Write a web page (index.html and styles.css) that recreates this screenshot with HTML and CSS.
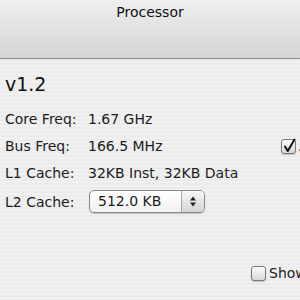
FILE: index.html
```html
<!DOCTYPE html>
<html>
<head>
<meta charset="utf-8">
<link rel="stylesheet" href="styles.css">
</head>
<body>
<div class="window">
  <div class="titlebar"><span class="title">Processor</span></div>
  <div class="content">
    <div class="version">v1.2</div>
    <div class="info">
      <div class="row"><span class="label">Core Freq:</span><span class="value">1.67 GHz</span></div>
      <div class="row"><span class="label">Bus Freq:</span><span class="value value-wide">166.5 MHz</span>
        <span class="check-wrap"><span class="checkbox"><svg class="tick" width="16" height="16" viewBox="0 0 16 16"><path d="M4 8.5 L6.8 13 L13.5 1.5" fill="none" stroke="#111" stroke-width="2" stroke-linecap="round" stroke-linejoin="round"/></svg></span><span class="check-label">Allow</span></span>
      </div>
      <div class="row"><span class="label">L1 Cache:</span><span class="value">32KB Inst, 32KB Data</span></div>
      <div class="row row-popup"><span class="label">L2 Cache:</span>
        <span class="popup"><span class="popup-text">512.0 KB</span><span class="popup-arrows"><svg width="8" height="13" viewBox="0 0 8 13"><path d="M4 1.5 L7 5.5 L1 5.5 Z M4 11.5 L1 7.5 L7 7.5 Z" fill="#222"/></svg></span></span>
      </div>
    </div>
    <div class="bottom">
      <span class="check-wrap"><span class="checkbox"></span><span class="check-label">Show</span></span>
    </div>
  </div>
</div>
</body>
</html>
```
FILE: styles.css
```css
html, body {
  margin: 0;
  padding: 0;
  width: 300px;
  height: 300px;
  overflow: hidden;
}
body {
  font-family: "DejaVu Sans", "Liberation Sans", sans-serif;
  font-size: 14px;
  color: #1c1c1c;
}
.window {
  width: 300px;
  height: 300px;
  display: flex;
  flex-direction: column;
}
.titlebar {
  height: 59px;
  flex: none;
  background: linear-gradient(#efefef, #d4d4d4);
  border-bottom: 1px solid #8c8c8c;
  text-align: center;
  box-sizing: border-box;
  padding-top: 4px;
  line-height: 16px;
}
.title {
  font-size: 14px;
  color: #111;
}
.content {
  flex: 1;
  background: repeating-linear-gradient(#ebebeb 0px, #ebebeb 2px, #f1f1f1 2px, #f1f1f1 4px);
  padding: 14px 0 0 5px;
  white-space: nowrap;
}
.version {
  font-size: 19px;
  line-height: 22px;
  color: #111;
  margin-bottom: 16px;
}
.info {
  display: flex;
  flex-direction: column;
  gap: 11px;
}
.row {
  display: flex;
  align-items: center;
  height: 16px;
  line-height: 16px;
}
.row-popup {
  height: 23px;
  margin-top: -2px;
}
.label {
  width: 83px;
  flex: none;
}
.value-wide {
  width: 193px;
  flex: none;
}
.check-wrap {
  display: flex;
  align-items: center;
  gap: 3px;
}
.checkbox {
  width: 13px;
  height: 13px;
  border: 1px solid #777;
  border-radius: 3px;
  background: linear-gradient(#fdfdfd, #d6d6d6);
  box-shadow: 0 1px 1px rgba(0,0,0,0.18);
  position: relative;
  flex: none;
}
.tick {
  position: absolute;
  left: -1px;
  top: -2px;
}
.popup {
  display: flex;
  align-items: stretch;
  width: 116px;
  height: 23px;
  border: 1px solid #8a8a8a;
  border-radius: 5px;
  background: linear-gradient(#ffffff, #f2f2f2);
  box-shadow: 0 1px 1px rgba(0,0,0,0.2);
  box-sizing: border-box;
  overflow: hidden;
  margin-left: 1px;
}
.popup-text {
  flex: 1;
  padding-left: 8px;
  line-height: 21px;
}
.popup-arrows {
  width: 22px;
  border-left: 1px solid #a8a8a8;
  background: linear-gradient(#f8f8f8, #d4d4d4);
  display: flex;
  align-items: center;
  justify-content: center;
}
.bottom {
  display: flex;
  margin-top: 52px;
  padding-left: 246px;
  line-height: 16px;
}
```
